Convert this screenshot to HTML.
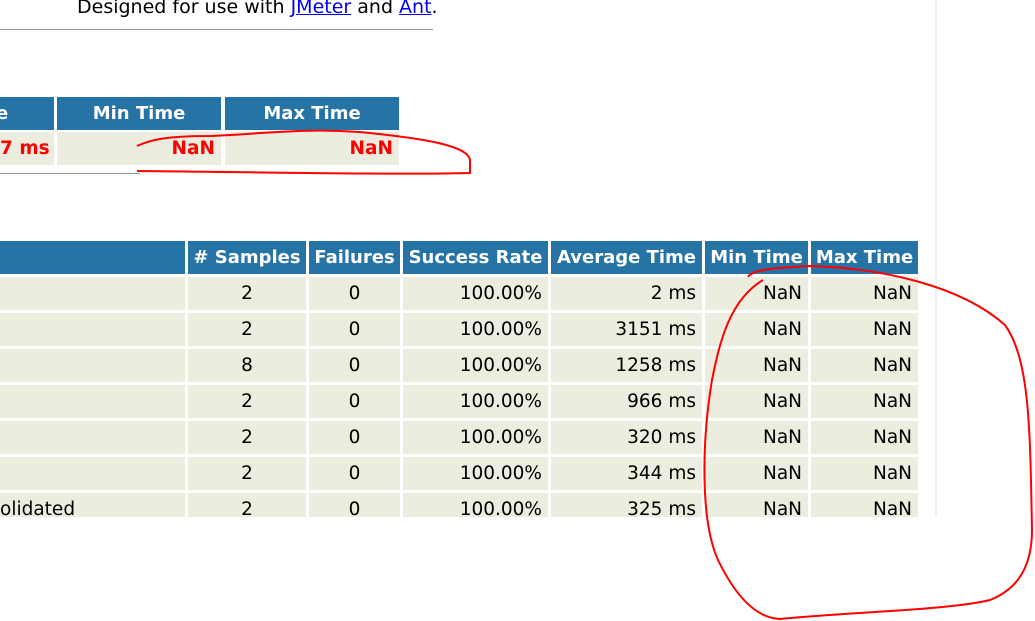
<!DOCTYPE html>
<html><head><meta charset="utf-8"><style>
body{margin:0;width:1035px;height:621px;background:#fff;position:relative;overflow:hidden;font-family:"DejaVu Sans","Liberation Sans",sans-serif;font-size:18.5px;color:#000}
.c{position:absolute;box-sizing:border-box;height:33px;line-height:34px;white-space:nowrap;overflow:hidden}
.h{background:#2673a5;color:#fff;font-weight:bold;text-align:center;font-size:18px}
.d{background:#ececdf;padding-right:6px;text-align:right}
.cn{text-align:center;padding:0}
a{color:#00e;text-decoration:underline}
</style></head><body>
<div style="position:absolute;left:77px;top:-4px;font-size:19px">Designed for use with <a>JMeter</a> and <a>Ant</a>.</div>
<div style="position:absolute;left:0;top:29px;width:433px;height:1px;background:#999"></div>
<div style="position:absolute;left:935px;top:0;width:2px;height:517px;background:#eee"></div>
<div class="c h" style="left:0;top:97px;width:54px;text-align:left;padding-left:0"><span style="margin-left:-4px">e</span></div>
<div class="c h" style="left:57px;top:97px;width:164px">Min Time</div>
<div class="c h" style="left:225px;top:97px;width:174px">Max Time</div>
<div class="c d" style="left:0;top:132px;width:54px;color:#f00;font-weight:bold">7 ms</div>
<div class="c d" style="left:57px;top:132px;width:164px;color:#f00;font-weight:bold">NaN</div>
<div class="c d" style="left:225px;top:132px;width:174px;color:#f00;font-weight:bold">NaN</div>
<div style="position:absolute;left:0;top:173px;width:140px;height:1px;background:#999"></div>
<div id="t2"></div>
<svg width="1035" height="621" style="position:absolute;left:0;top:0" fill="none" stroke="#f00" stroke-width="2">
<path d="M137 146 C150 140 165 136 210 136 C260 134 300 128 360 132 C420 138 468 145 470 160 L470 173 C400 175 250 172 137 171"/>
<path d="M748 277 C752 270 770 268 810 266 C880 268 960 285 1005 325 C1030 360 1030 430 1032 530 C1032 570 1015 590 990 600 C950 610 850 612 780 619 C755 618 735 595 718 560 C700 520 702 440 712 380 C720 340 730 300 763 280"/>
</svg>
<script>
var cols=[[0,185],[188,306],[309,400],[403,548],[551,702],[705,808],[811,918]];
var hd=["","# Samples","Failures","Success Rate","Average Time","Min Time","Max Time"];
var rows=[["","2","0","100.00%","2 ms"],["","2","0","100.00%","3151 ms"],["","8","0","100.00%","1258 ms"],["","2","0","100.00%","966 ms"],["","2","0","100.00%","320 ms"],["","2","0","100.00%","344 ms"],["olidated","2","0","100.00%","325 ms"]];
var h="";
cols.forEach(function(c,i){h+='<div class="c h" style="left:'+c[0]+'px;top:241px;width:'+(c[1]-c[0])+'px">'+hd[i]+'</div>';});
rows.forEach(function(r,j){var y=277+36*j;r=r.concat(["NaN","NaN"]);
cols.forEach(function(c,i){var cls=i==0?'c d" style="text-align:left;padding-left:0;':(i<3?'c d cn" style="':'c d" style="');
var ht=j==6?'height:24px;':'';
h+='<div class="'+cls+ht+'left:'+c[0]+'px;top:'+y+'px;width:'+(c[1]-c[0])+'px">'+r[i]+'</div>';});});
document.getElementById("t2").outerHTML=h;
</script>
</body></html>
